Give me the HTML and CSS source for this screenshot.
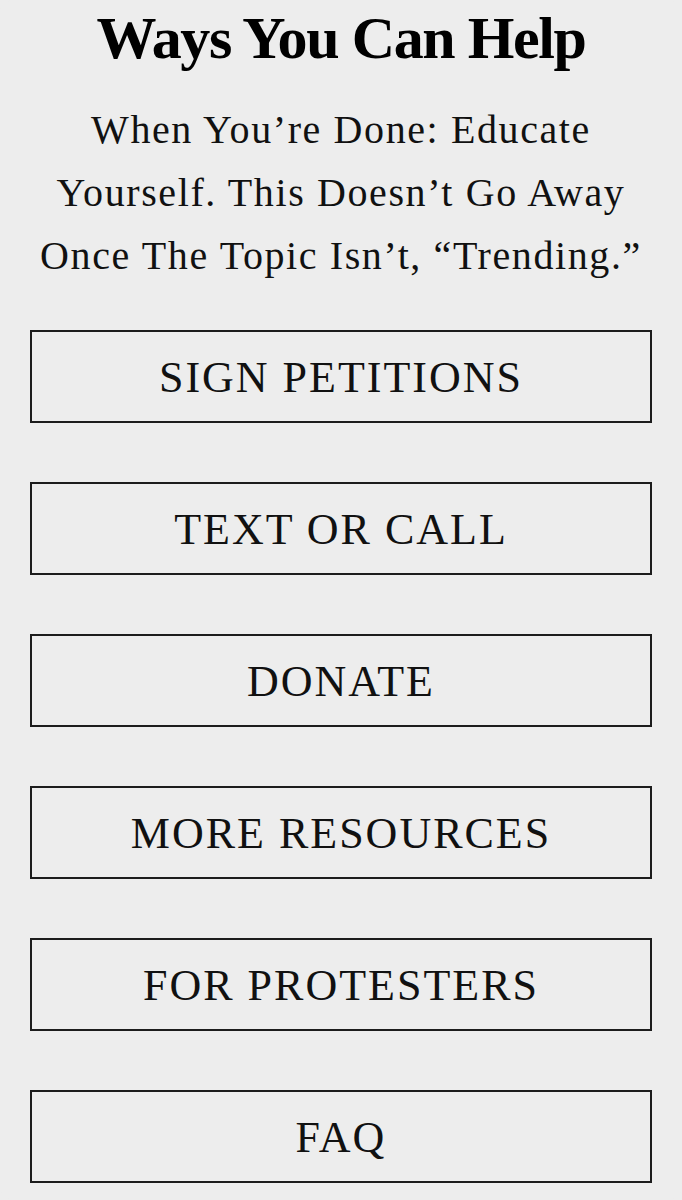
FILE: index.html
```html
<!DOCTYPE html>
<html lang="en">
<head>
<meta charset="utf-8">
<title>Ways You Can Help</title>
<link rel="stylesheet" href="styles.css">
</head>
<body>
<main class="panel">
  <h1 class="title">Ways You Can Help</h1>
  <p class="lead">
    <span class="line">When You’re Done: Educate</span>
    <span class="line">Yourself. This Doesn’t Go Away</span>
    <span class="line">Once The Topic Isn’t, “Trending.”</span>
  </p>
  <nav class="actions">
    <a class="action" href="#petitions">SIGN PETITIONS</a>
    <a class="action" href="#text-call">TEXT OR CALL</a>
    <a class="action" href="#donate">DONATE</a>
    <a class="action" href="#resources">MORE RESOURCES</a>
    <a class="action" href="#protesters">FOR PROTESTERS</a>
    <a class="action" href="#faq">FAQ</a>
  </nav>
</main>
</body>
</html>
```

FILE: styles.css
```css
html, body {
  margin: 0;
  padding: 0;
  background: #ededed;
}

body {
  font-family: "Liberation Serif", "Times New Roman", serif;
  color: #111;
}

.panel {
  width: 682px;
  height: 1200px;
  box-sizing: border-box;
  padding: 4px 30px 0 30px;
  background: #ededed;
  border-radius: 14px;
  overflow: hidden;
  display: flex;
  flex-direction: column;
  align-items: stretch;
}

.title {
  margin: 0;
  text-align: center;
  font-size: 60px;
  font-weight: bold;
  line-height: 68px;
  color: #000;
  letter-spacing: -1.4px;
  white-space: nowrap;
}

.lead {
  margin: 26px 0 0 0;
  display: flex;
  flex-direction: column;
  align-items: center;
  font-size: 40px;
  line-height: 63px;
  letter-spacing: 1.6px;
}

.line {
  display: block;
  white-space: nowrap;
}

.actions {
  margin-top: 43px;
  display: flex;
  flex-direction: column;
  gap: 59px;
}

.action {
  height: 93px;
  box-sizing: border-box;
  border: 2px solid #1c1c1c;
  display: flex;
  align-items: center;
  justify-content: center;
  padding-top: 2px;
  color: #111;
  text-decoration: none;
  font-size: 44px;
  letter-spacing: 2px;
  white-space: nowrap;
}
```
